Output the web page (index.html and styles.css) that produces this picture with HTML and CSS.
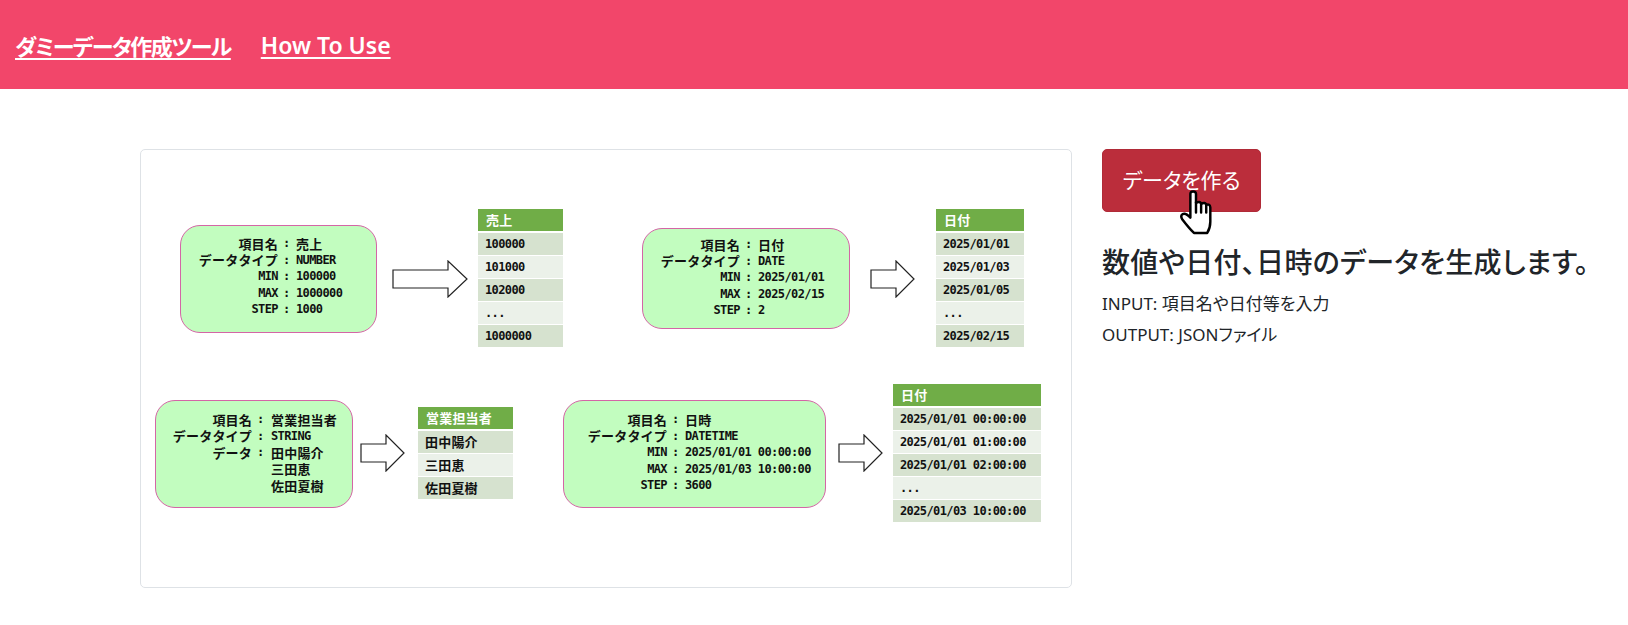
FILE: index.html
```html
<!DOCTYPE html>
<html lang="ja">
<head>
    <meta charset="UTF-8">
    <title>ダミーデータ作成ツール</title>
    <link rel="stylesheet" href="styles.css">
</head>
<body>
    <header class="top-bar">
        <a class="top-link top-title" href="#">ダミーデータ作成ツール</a>
        <a class="top-link" href="#">How To Use</a>
    </header>

    <main class="content">
        <div class="diagram-card">
            <div class="bubble b1">
                <span class="jp lab">項目名</span><span class="col">:</span><span class="jp">売上</span>
                <span class="jp lab">データタイプ</span><span class="col">:</span><span>NUMBER</span>
                <span class="lab">MIN</span><span class="col">:</span><span>100000</span>
                <span class="lab">MAX</span><span class="col">:</span><span>1000000</span>
                <span class="lab">STEP</span><span class="col">:</span><span>1000</span>
            </div>
            <svg class="arrow a1" viewBox="0 0 76 38" preserveAspectRatio="none"><path d="M1 10H56V1L75 19L56 37V28H1Z"/></svg>
            <div class="sheet s1">
                <div class="sheet-head jp">売上</div>
                <div class="row">100000</div>
                <div class="row alt">101000</div>
                <div class="row">102000</div>
                <div class="row alt">...</div>
                <div class="row">1000000</div>
            </div>

            <div class="bubble b2">
                <span class="jp lab">項目名</span><span class="col">:</span><span class="jp">日付</span>
                <span class="jp lab">データタイプ</span><span class="col">:</span><span>DATE</span>
                <span class="lab">MIN</span><span class="col">:</span><span>2025/01/01</span>
                <span class="lab">MAX</span><span class="col">:</span><span>2025/02/15</span>
                <span class="lab">STEP</span><span class="col">:</span><span>2</span>
            </div>
            <svg class="arrow a2" viewBox="0 0 45 38" preserveAspectRatio="none"><path d="M1 10H26V1L44 19L26 37V28H1Z"/></svg>
            <div class="sheet s2">
                <div class="sheet-head jp">日付</div>
                <div class="row">2025/01/01</div>
                <div class="row alt">2025/01/03</div>
                <div class="row">2025/01/05</div>
                <div class="row alt">...</div>
                <div class="row">2025/02/15</div>
            </div>

            <div class="bubble b3">
                <span class="jp lab">項目名</span><span class="col">:</span><span class="jp">営業担当者</span>
                <span class="jp lab">データタイプ</span><span class="col">:</span><span>STRING</span>
                <span class="jp lab">データ</span><span class="col">:</span><span class="jp">田中陽介</span>
                <span></span><span></span><span class="jp">三田恵</span>
                <span></span><span></span><span class="jp">佐田夏樹</span>
            </div>
            <svg class="arrow a3" viewBox="0 0 45 38" preserveAspectRatio="none"><path d="M1 10H26V1L44 19L26 37V28H1Z"/></svg>
            <div class="sheet s3">
                <div class="sheet-head jp">営業担当者</div>
                <div class="row jp">田中陽介</div>
                <div class="row alt jp">三田恵</div>
                <div class="row jp">佐田夏樹</div>
            </div>

            <div class="bubble b4">
                <span class="jp lab">項目名</span><span class="col">:</span><span class="jp">日時</span>
                <span class="jp lab">データタイプ</span><span class="col">:</span><span>DATETIME</span>
                <span class="lab">MIN</span><span class="col">:</span><span>2025/01/01 00:00:00</span>
                <span class="lab">MAX</span><span class="col">:</span><span>2025/01/03 10:00:00</span>
                <span class="lab">STEP</span><span class="col">:</span><span>3600</span>
            </div>
            <svg class="arrow a4" viewBox="0 0 45 38" preserveAspectRatio="none"><path d="M1 10H26V1L44 19L26 37V28H1Z"/></svg>
            <div class="sheet s4">
                <div class="sheet-head jp">日付</div>
                <div class="row">2025/01/01 00:00:00</div>
                <div class="row alt">2025/01/01 01:00:00</div>
                <div class="row">2025/01/01 02:00:00</div>
                <div class="row alt">...</div>
                <div class="row">2025/01/03 10:00:00</div>
            </div>
        </div>

        <section class="side">
            <button class="make-btn" type="button">データを作る</button>
            <h2 class="lead">数値や日付、日時のデータを生成します。</h2>
            <p class="note">INPUT: 項目名や日付等を入力</p>
            <p class="note">OUTPUT: JSONファイル</p>
            <svg class="hand" viewBox="0 0 32 44">
                <path d="M10.5 4Q10.5 1.5 13.2 1.5Q16 1.5 16 4V12.5Q20 10.5 21 13.5Q25 11.5 26 14.5Q29.5 13 30 17V31Q30 37 27 42H14Q9 37 2.5 28.5Q0.5 25 3 23.5Q6 22 10.5 27Z"/>
                <path d="M16 12V22M21 13V22M26 14.5V22"/>
            </svg>
        </section>
    </main>
</body>
</html>
```

FILE: styles.css
```css
* {
    box-sizing: border-box;
    margin: 0;
    padding: 0;
}

body {
    font-family: "Noto Sans", "Noto Sans CJK JP", sans-serif;
    font-feature-settings: "palt";
    background: white;
    color: #212529;
}

.top-bar {
    display: flex;
    align-items: center;
    gap: 30px;
    height: 89px;
    padding-left: 15px;
    background-color: #f2466a;
}

.top-link {
    color: white;
    font-size: 23px;
    font-weight: 600;
    text-decoration: underline;
    text-underline-offset: 3px;
}

.top-title {
    font-size: 22px;
    font-weight: 700;
    letter-spacing: -1.5px;
}

.content {
    display: flex;
    align-items: flex-start;
    gap: 30px;
    padding: 60px 0 0 140px;
}

/* diagram */
.diagram-card {
    position: relative;
    flex: none;
    width: 932px;
    height: 439px;
    border: 1px solid #dee2e6;
    border-radius: 5px;
    font-family: "DejaVu Sans Mono", "Noto Sans CJK JP", monospace;
    font-size: 12px;
    font-weight: 700;
    letter-spacing: -0.6px;
    color: #111;
}

.jp {
    font-family: "Noto Sans CJK JP", sans-serif;
    font-feature-settings: normal;
    font-size: 13px;
    font-weight: 700;
    letter-spacing: 0.2px;
}

.bubble {
    position: absolute;
    display: grid;
    grid-template-columns: 97px 18px 1fr;
    grid-auto-rows: 16.5px;
    align-items: center;
    padding-top: 9px;
    background: #c2fdbf;
    border: 1.5px solid #d465a6;
    border-radius: 20px;
    white-space: nowrap;
}

.lab {
    text-align: right;
}

.col {
    padding-left: 5px;
}

.b1 { left: 39px; top: 75px; width: 197px; height: 108px; }
.b2 { left: 501px; top: 78px; width: 208px; height: 101px; padding-top: 7px; }
.b3 { left: 14px; top: 250px; width: 198px; height: 108px; grid-template-columns: 96px 19px 1fr; padding-top: 10px; }
.b4 { left: 422px; top: 250px; width: 263px; height: 108px; grid-template-columns: 103px 18px 1fr; padding-top: 10px; }

.arrow {
    position: absolute;
    fill: white;
    stroke: #222;
    stroke-width: 1.2;
}

.a1 { left: 251px; top: 110px; width: 76px; height: 38px; }
.a2 { left: 729px; top: 110px; width: 45px; height: 38px; }
.a3 { left: 219px; top: 284px; width: 45px; height: 38px; }
.a4 { left: 697px; top: 284px; width: 45px; height: 38px; }

.sheet {
    position: absolute;
    display: flex;
    flex-direction: column;
    gap: 1px;
}

.s1 { left: 337px; top: 59px; width: 85px; }
.s2 { left: 795px; top: 59px; width: 88px; }
.s3 { left: 277px; top: 257px; width: 95px; }
.s4 { left: 752px; top: 234px; width: 148px; }

.sheet-head {
    height: 22px;
    margin-bottom: 1px;
    padding-left: 8px;
    line-height: 21px;
    background: #70ad47;
    color: white;
}

.row {
    height: 22px;
    padding-left: 7px;
    line-height: 22px;
    background: #d6e2cf;
    white-space: nowrap;
}

.row.alt {
    background: #ebf1e9;
}

/* right column */
.side {
    position: relative;
    flex: none;
}

.make-btn {
    display: block;
    width: 159px;
    height: 63px;
    padding-bottom: 3px;
    border: 1px solid #b02a37;
    border-radius: 5px;
    background-color: #bb2d3b;
    color: white;
    font-family: inherit;
    font-feature-settings: inherit;
    font-size: 21px;
}

.lead {
    margin: 31px 0 0;
    font-size: 28px;
    font-weight: 500;
    line-height: 39px;
    letter-spacing: 0.3px;
    white-space: nowrap;
}

.note {
    font-size: 17px;
    line-height: 31px;
    white-space: nowrap;
}

.lead + .note {
    margin-top: 6px;
}

.hand {
    position: absolute;
    left: 77px;
    top: 41px;
    width: 34px;
    height: 45px;
    fill: white;
    stroke: black;
    stroke-width: 2.4;
    stroke-linejoin: round;
    stroke-linecap: round;
}
```
